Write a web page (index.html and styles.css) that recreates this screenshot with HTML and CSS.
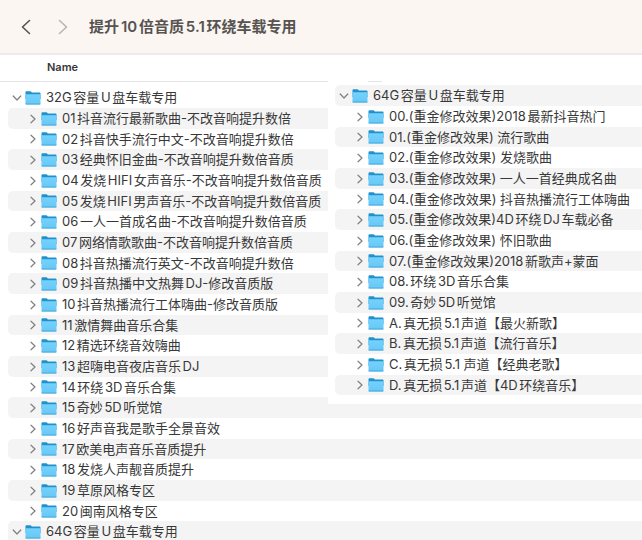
FILE: index.html
```html
<!DOCTYPE html>
<html lang="zh-CN">
<head>
<meta charset="utf-8">
<meta name="viewport" content="width=device-width, initial-scale=1">
<title>提升10倍音质5.1环绕车载专用</title>
<link rel="stylesheet" href="styles.css">
</head>
<body>
<svg class="defs" aria-hidden="true">
  <defs>
    <linearGradient id="front" x1="0" y1="0" x2="0" y2="1">
      <stop offset="0" stop-color="#74d2fc"/>
      <stop offset="1" stop-color="#67c7f6"/>
    </linearGradient>
    <symbol id="folder" viewBox="0 0 16 14">
      <path d="M.5 1.2Q.5.3 1.4.3h4q.5 0 .9.5l.5.6h7.8q.9 0 .9.9V8H.5z" fill="#2191cb"/>
      <path d="M.5 3.3h15v9.3q0 .9-.9.9H1.4q-.9 0-.9-.9z" fill="url(#front)"/>
      <path d="M.5 12.5h15v.2q0 .9-.9.9H1.4q-.9 0-.9-.9z" fill="#4aaad9"/>
    </symbol>
    <symbol id="chevron" viewBox="0 0 10 10">
      <path d="M3 1.2 7 5 3 8.8" fill="none" stroke="currentColor" stroke-width="1.2" stroke-linecap="round" stroke-linejoin="round"/>
    </symbol>
  </defs>
</svg>
<header class="toolbar">
  <button class="nav" type="button" aria-label="Back"><svg class="nav-icon" viewBox="0 0 10 16"><path d="M8.5 1.5 1.5 8l7 6.5"/></svg></button>
  <button class="nav nav-off" type="button" aria-label="Forward"><svg class="nav-icon" viewBox="0 0 10 16"><path d="m1.5 1.5 7 6.5-7 6.5"/></svg></button>
  <h1 class="title">提升10倍音质5.1环绕车载专用</h1>
</header>
<main class="browser">
  <div class="column-head">Name</div>
  <ul class="list" id="main-list"></ul>
  <section class="panel" aria-label="64G">
    <ul class="list" id="panel-list"></ul>
  </section>
</main>
<script src="app.js"></script>
</body>
</html>
```
FILE: app.js
```js
const mainRows = [
  "32G容量U盘车载专用",
  "01抖音流行最新歌曲-不改音响提升数倍",
  "02抖音快手流行中文-不改音响提升数倍",
  "03经典怀旧金曲-不改音响提升数倍音质",
  "04发烧HIFI女声音乐-不改音响提升数倍音质",
  "05发烧HIFI男声音乐-不改音响提升数倍音质",
  "06一人一首成名曲-不改音响提升数倍音质",
  "07网络情歌歌曲-不改音响提升数倍音质",
  "08抖音热播流行英文-不改音响提升数倍",
  "09抖音热播中文热舞DJ-修改音质版",
  "10抖音热播流行工体嗨曲-修改音质版",
  "11激情舞曲音乐合集",
  "12精选环绕音效嗨曲",
  "13超嗨电音夜店音乐DJ",
  "14环绕3D音乐合集",
  "15奇妙5D听觉馆",
  "16好声音我是歌手全景音效",
  "17欧美电声音乐音质提升",
  "18发烧人声靓音质提升",
  "19草原风格专区",
  "20闽南风格专区",
  "64G容量U盘车载专用"
];

const panelRows = [
  "64G容量U盘车载专用",
  "00.(重金修改效果)2018最新抖音热门",
  "01.(重金修改效果) 流行歌曲",
  "02.(重金修改效果) 发烧歌曲",
  "03.(重金修改效果) 一人一首经典成名曲",
  "04.(重金修改效果) 抖音热播流行工体嗨曲",
  "05.(重金修改效果)4D环绕DJ车载必备",
  "06.(重金修改效果) 怀旧歌曲",
  "07.(重金修改效果)2018新歌声+蒙面",
  "08.环绕3D音乐合集",
  "09.奇妙5D听觉馆",
  "A.真无损5.1声道【最火新歌】",
  "B.真无损5.1声道【流行音乐】",
  "C.真无损5.1 声道【经典老歌】",
  "D.真无损5.1声道【4D环绕音乐】"
];

function fill(id, rows) {
  document.getElementById(id).innerHTML = rows.map((name) => {
    const root = /^\d\dG/.test(name);
    return `<li class="row ${root ? "row-root" : ""}">
      <button class="toggle" type="button" aria-expanded="${root}" aria-label="${name}"><svg class="chevron"><use href="#chevron"/></svg></button>
      <svg class="folder" aria-hidden="true"><use href="#folder"/></svg>
      <span class="name">${name}</span>
    </li>`;
  }).join("");
}

fill("main-list", mainRows);
fill("panel-list", panelRows);
```
FILE: styles.css
```css
* {
  box-sizing: border-box;
}

body {
  display: flex;
  flex-direction: column;
  height: 100vh;
  margin: 0;
  overflow: hidden;
  background: #fff;
  color: #383838;
  font-family: Inter, "Noto Sans CJK SC", sans-serif;
  font-size: 13px;
  text-autospace: normal;
}

button {
  display: grid;
  place-items: center;
  padding: 0;
  border: 0;
  background: none;
  color: inherit;
}

.defs {
  position: absolute;
  width: 0;
  height: 0;
}

.toolbar {
  display: flex;
  flex: none;
  align-items: center;
  height: 55px;
  padding-left: 16px;
  border-bottom: 2px solid #f0e8ee;
  background: #fbf6f2;
}

.nav {
  width: 20px;
  height: 24px;
  margin-right: 17px;
  color: #555250;
}

.nav-off {
  margin-right: 16px;
  color: #b9b5b2;
}

.nav-icon {
  width: 10px;
  height: 16px;
  fill: none;
  stroke: currentColor;
  stroke-width: 1.6;
  stroke-linecap: round;
  stroke-linejoin: round;
}

.title {
  margin: 0;
  padding-bottom: 2px;
  color: #565351;
  font-size: 15px;
  font-weight: 600;
  white-space: nowrap;
}

.browser {
  position: relative;
  flex: 1;
  min-height: 0;
  overflow: hidden;
}

.column-head {
  height: 27px;
  margin-bottom: 5px;
  padding-left: 47px;
  border-bottom: 1px solid #e4e4e4;
  font-size: 11px;
  font-weight: 600;
  line-height: 25px;
}

.list {
  display: grid;
  grid-auto-rows: 21px 21px 20px;
  margin: 0;
  padding: 0 0 0 8px;
  list-style: none;
}

.row {
  display: flex;
  align-items: center;
  padding-left: 18px;
  border-radius: 5px 0 0 5px;
  white-space: nowrap;
}

.row-root {
  padding-left: 2px;
}

#main-list .row:nth-child(even),
#panel-list .row:nth-child(odd) {
  background: #f4f4f4;
}

.toggle {
  width: 13px;
  height: 16px;
  margin-right: 2px;
  color: #808080;
}

.chevron {
  width: 10px;
  height: 10px;
}

.row-root .chevron {
  transform: rotate(90deg);
}

.folder {
  width: 16px;
  height: 14px;
  margin-right: 5px;
}

.name {
  padding-bottom: 2px;
}

.panel {
  position: absolute;
  top: 26px;
  right: 0;
  left: 328px;
  padding: 4px 0 9px;
  background: #fff;
}

.panel::before {
  position: absolute;
  top: 0;
  left: 40px;
  width: 14px;
  height: 1px;
  background: #e4e4e4;
  content: "";
}

.panel .list {
  padding-left: 7px;
}
```
